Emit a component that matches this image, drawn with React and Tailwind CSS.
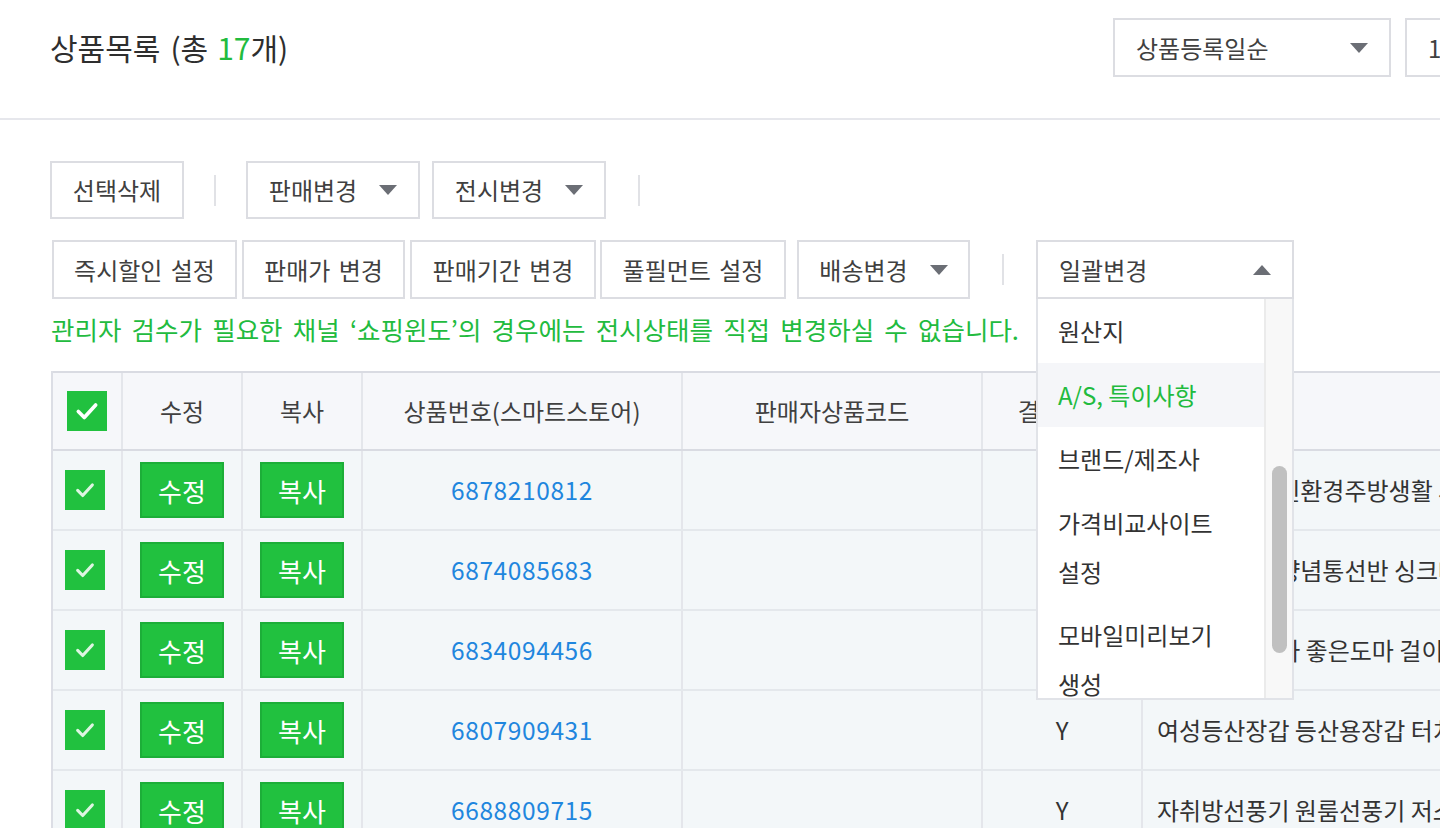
import React from 'react'

const Caret = ({ up = false }) => (
  <svg width="18" height="10" viewBox="0 0 18 10" className="shrink-0">
    {up ? <path d="M0 10 L9 0 L18 10 Z" fill="#6b6e75" /> : <path d="M0 0 L18 0 L9 10 Z" fill="#6b6e75" />}
  </svg>
)

const Check = ({ size = 22, op = 1 }) => (
  <svg width={size} height={size} viewBox="0 0 24 24" fill="none" style={{ opacity: op }}>
    <path d="M4 12.5 L9.5 18 L20 6.5" stroke="#fff" strokeWidth="3.4" strokeLinecap="round" strokeLinejoin="round" />
  </svg>
)

const Box = ({ children, className = '' }) => (
  <div className={'h-full flex items-center justify-center border-2 border-[#dcdde2] bg-white text-[24px] text-[#404040] whitespace-nowrap ' + className}>
    {children}
  </div>
)

const Sep = () => <div className="w-[2px] h-[31px] bg-[#e1e2e6]" />

const rows = [
  { no: '6878210812', pay: 'Y', name: '원목 통도마 친환경주방생활 세트' },
  { no: '6874085683', pay: 'Y', name: '주방 수납용 양념통선반 싱크대 정리대' },
  { no: '6834094456', pay: 'Y', name: '원목 결 향기가 좋은도마 걸이형 세트' },
  { no: '6807909431', pay: 'Y', name: '여성등산장갑 등산용장갑 터치장갑' },
  { no: '6688809715', pay: 'Y', name: '자취방선풍기 원룸선풍기 저소음 탁상용' },
]

const cols = 'grid grid-cols-[70px_120px_120px_320px_300px_160px_420px]'
const cell = 'flex items-center justify-center border-r-2 border-[#e4e6eb]'

export default function App() {
  return (
    <div className="w-[1440px] h-[828px] overflow-hidden bg-white font-['Noto_Sans_CJK_KR','Noto_Sans',sans-serif] text-[#333]">
      {/* header */}
      <div className="w-[1440px] h-[120px] border-b-2 border-[#e6e7ec] flex pt-[18px]">
        <div className="pl-[50px] h-[59px] flex items-center text-[30px] text-[#2e2e2e] whitespace-nowrap">
          <span>상품목록</span>
          <span className="ml-[10px]">(총</span>
          <span className="ml-[9px] text-[#22bb3e]">17</span>
          <span>개)</span>
        </div>
        <div className="ml-auto -mr-[165px] flex gap-[14px] h-[59px] shrink-0">
          <div className="w-[278px] h-full border-2 border-[#dcdde2] flex items-center justify-between px-[21px] text-[24px] text-[#404040]">
            <span>상품등록일순</span>
            <Caret />
          </div>
          <div className="w-[200px] h-full border-2 border-[#dcdde2] flex items-center px-[21px] text-[24px] text-[#404040] whitespace-nowrap">
            10개씩
          </div>
        </div>
      </div>

      {/* toolbar */}
      <div className="pl-[51px] pt-[41px]">
        <div className="flex items-center h-[58px] -ml-[1px]">
          <Box className="w-[134px]">선택삭제</Box>
          <div className="mx-[30px]"><Sep /></div>
          <Box className="w-[174px] gap-[22px]">판매변경 <Caret /></Box>
          <Box className="w-[174px] gap-[22px] ml-[12px]">전시변경 <Caret /></Box>
          <div className="ml-[32px]"><Sep /></div>
        </div>
        <div className="flex items-center h-[59px] mt-[21px] ml-[1px]">
          <Box className="w-[185px] [word-spacing:3px]">즉시할인 설정</Box>
          <Box className="w-[163px] ml-[5px] [word-spacing:3px]">판매가 변경</Box>
          <Box className="w-[186px] ml-[5px] [word-spacing:3px]">판매기간 변경</Box>
          <Box className="w-[186px] ml-[4px] [word-spacing:3px]">풀필먼트 설정</Box>
          <Box className="w-[173px] ml-[11px] gap-[22px]">배송변경 <Caret /></Box>
          <div className="mx-[32px]"><Sep /></div>
          <div className="relative w-[258px] h-full">
            <div className="h-full border-2 border-[#dcdde2] flex items-center justify-between px-[21px] text-[24px] text-[#404040]">
              <span>일괄변경</span>
              <Caret up />
            </div>
            {/* open dropdown */}
            <div className="absolute left-0 top-full z-10 w-[258px] h-[401px] bg-white border-2 border-t-0 border-[#e1e3e8] flex overflow-hidden">
              <div className="w-[226px] text-[24px] text-[#333]">
                <div className="h-[64px] flex items-center px-[20px]">원산지</div>
                <div className="h-[64px] flex items-center px-[20px] bg-[#f5f6f9] text-[#22bb3e]">A/S, 특이사항</div>
                <div className="h-[64px] flex items-center px-[20px]">브랜드/제조사</div>
                <div className="px-[20px] py-[7px] leading-[49px]">가격비교사이트<br />설정</div>
                <div className="px-[20px] py-[7px] leading-[49px]">모바일미리보기<br />생성</div>
              </div>
              <div className="flex-1 bg-[#f8f8f8] border-l-2 border-[#ebebeb] pt-[167px] pl-[6px]">
                <div className="w-[15px] h-[187px] rounded-full bg-[#c0c0c0]" />
              </div>
            </div>
          </div>
        </div>
        <div className="h-[72px] pt-[12px] leading-[36px] text-[25.5px] text-[#22bb3e] [word-spacing:4.5px] whitespace-nowrap">
          관리자 검수가 필요한 채널 ‘쇼핑윈도’의 경우에는 전시상태를 직접 변경하실 수 없습니다.
        </div>

        {/* table */}
        <div className="border-l-2 border-[#dcdee5] w-max">
          <div className={cols + ' h-[80px] bg-[#f6f7fa] border-t-2 border-b-2 border-[#d9dbe2] text-[24px] text-[#404040]'}>
            <div className={cell}>
              <div className="w-[40px] h-[40px] bg-[#21c13f] flex items-center justify-center"><Check size={26} /></div>
            </div>
            <div className={cell}>수정</div>
            <div className={cell}>복사</div>
            <div className={cell}>상품번호(스마트스토어)</div>
            <div className={cell}>판매자상품코드</div>
            <div className={cell}>결제여부</div>
            <div className="flex items-center pl-[24px]">상품명</div>
          </div>
          {rows.map((r) => (
            <div key={r.no} className={cols + ' h-[80px] bg-[#f3f7f9] border-b-2 border-[#e4e8ec]'}>
              <div className={cell}>
                <div className="w-[40px] h-[40px] bg-[#21c13f] flex items-center justify-center -ml-[4px]"><Check size={22} op={0.85} /></div>
              </div>
              <div className={cell}>
                <button className="w-[84px] h-[56px] bg-[#21c13f] border-2 border-[#1cae38] text-white text-[26px]">수정</button>
              </div>
              <div className={cell}>
                <button className="w-[84px] h-[56px] bg-[#21c13f] border-2 border-[#1cae38] text-white text-[26px]">복사</button>
              </div>
              <div className={cell + ' text-[24.5px] text-[#1f86de] tracking-[0.6px]'}>{r.no}</div>
              <div className={cell} />
              <div className={cell + ' text-[24px] text-[#333]'}>{r.pay}</div>
              <div className="flex items-center pl-[14px] text-[24px] text-[#333] whitespace-nowrap overflow-hidden">{r.name}</div>
            </div>
          ))}
        </div>
      </div>
    </div>
  )
}
